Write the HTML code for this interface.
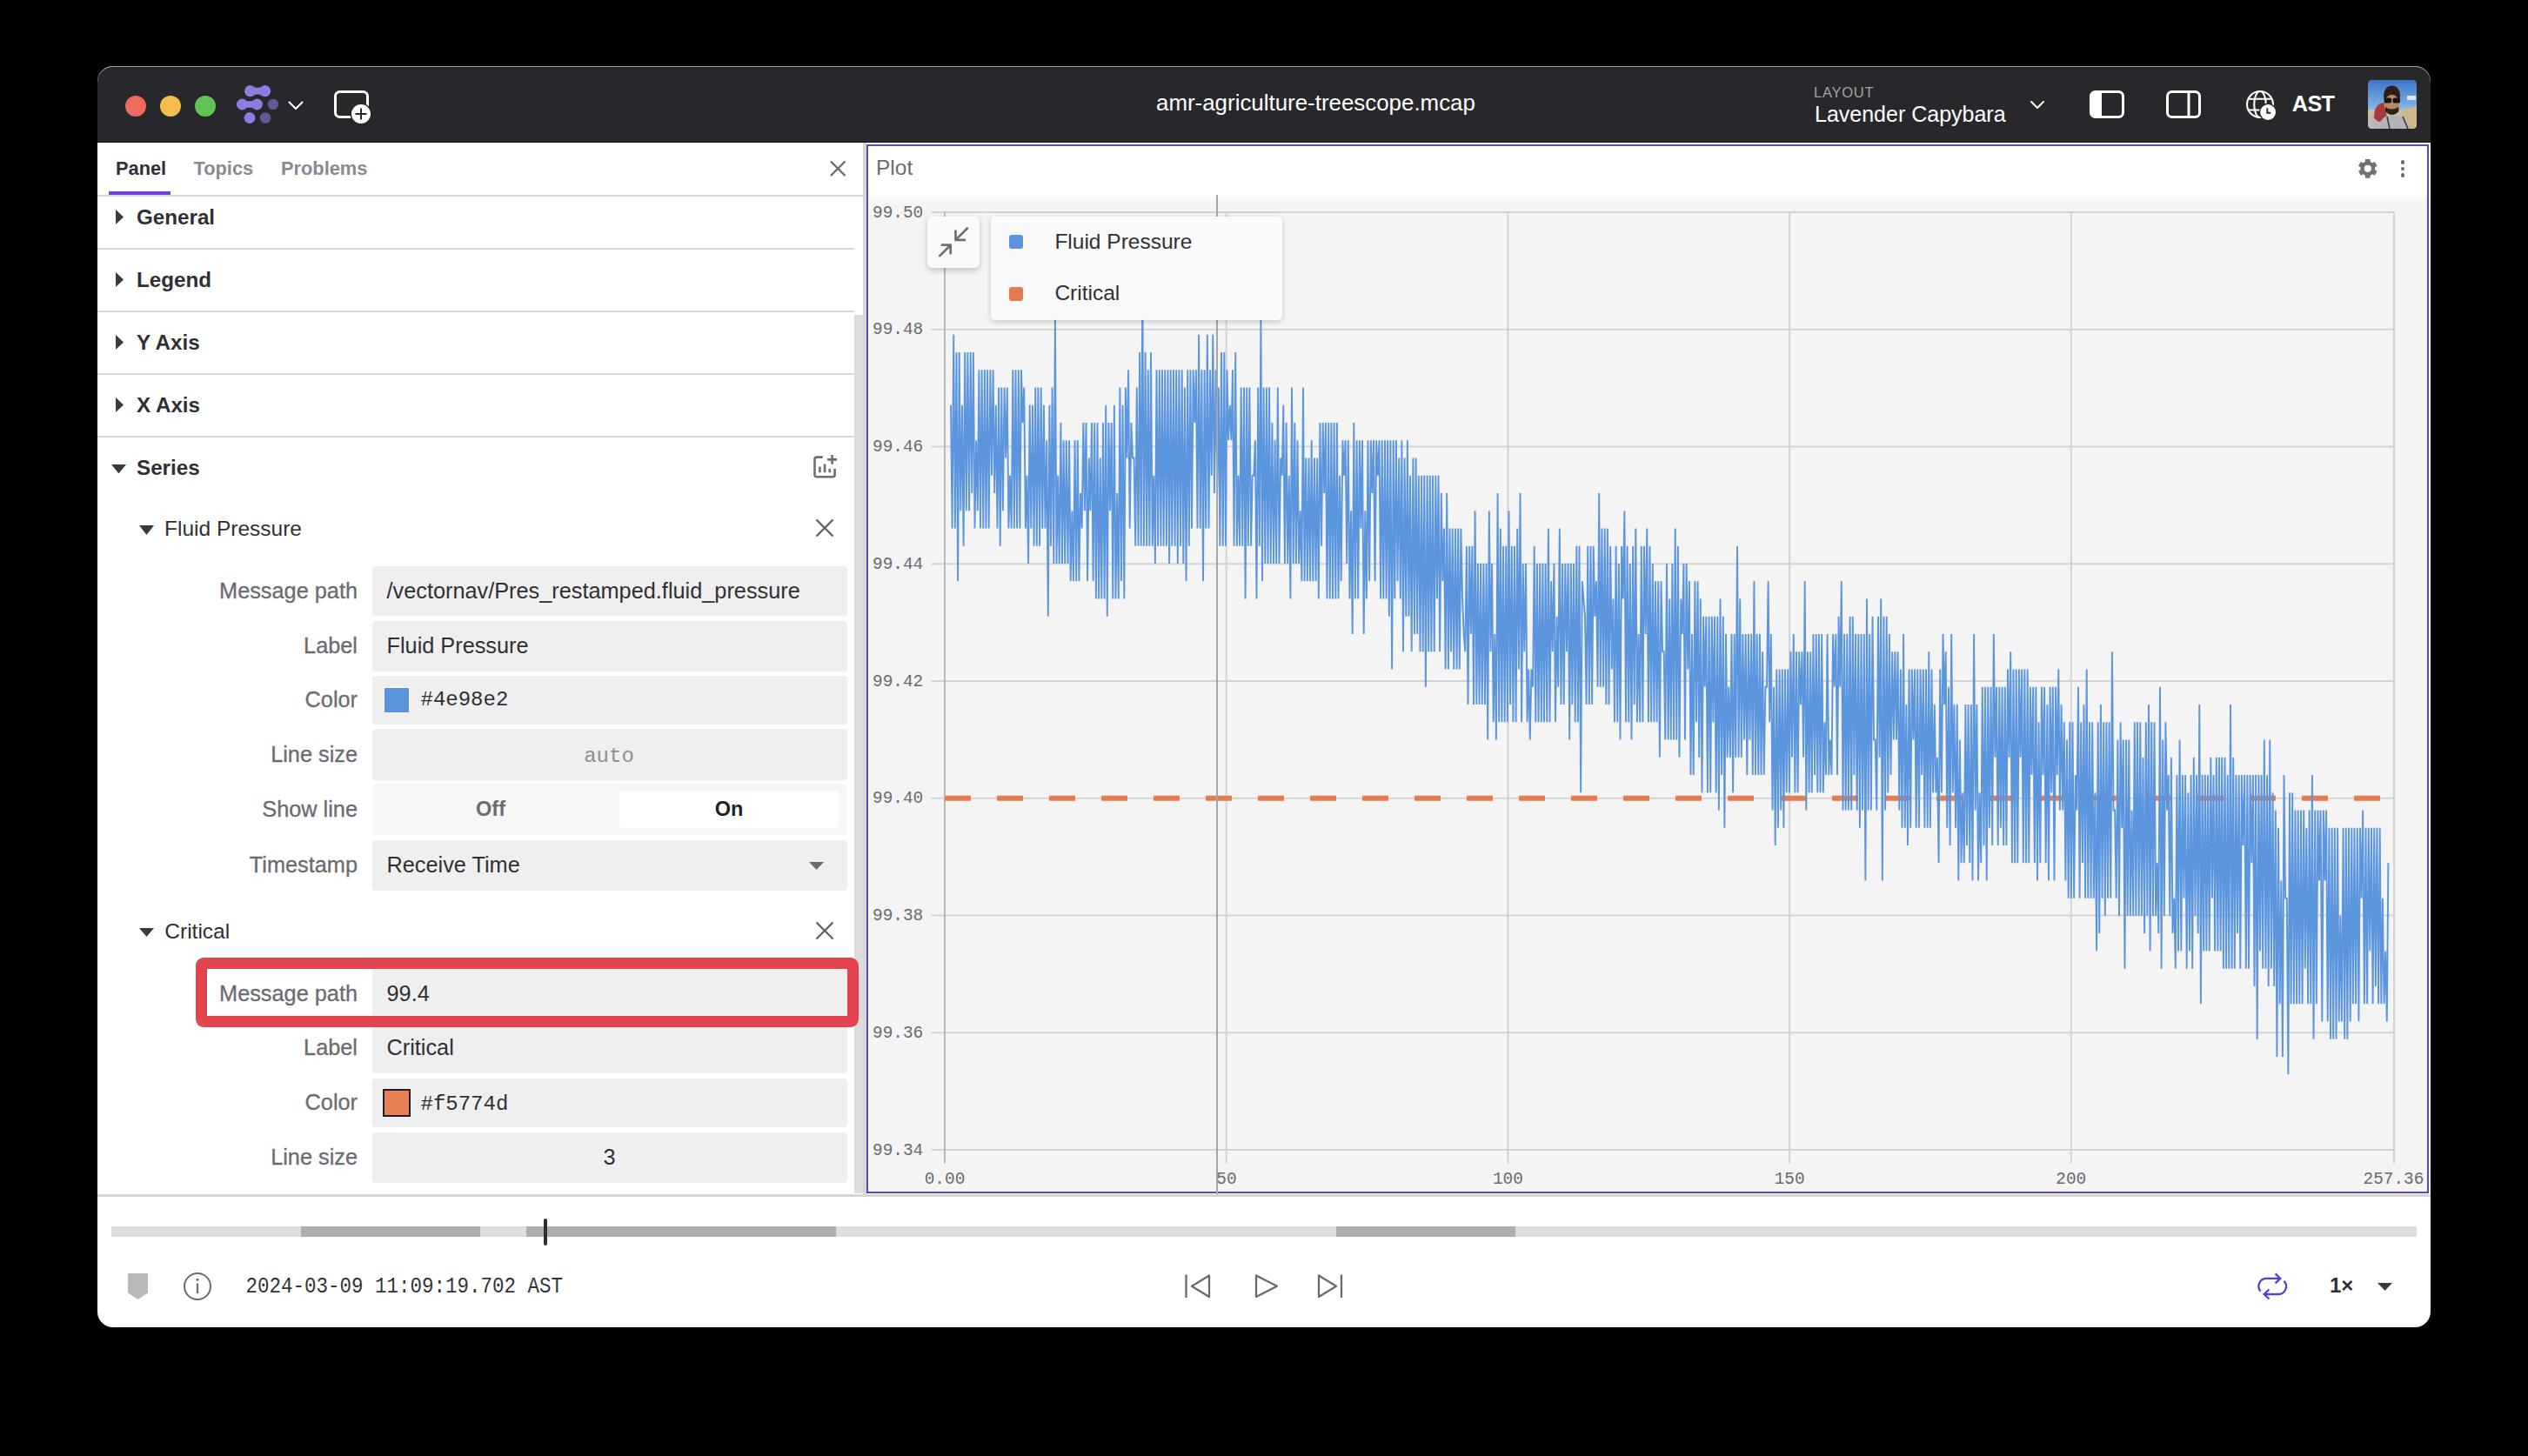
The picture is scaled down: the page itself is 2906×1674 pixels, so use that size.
<!DOCTYPE html>
<html><head><meta charset="utf-8"><title>Plot</title>
<style>
html,body{margin:0;padding:0;background:#000;width:2906px;height:1674px;overflow:hidden;}
.b{position:absolute;}
.t{position:absolute;white-space:nowrap;}
</style></head><body>
<div class="b" style="left:112.00px;top:76.00px;width:2682.00px;height:1450.00px;background:#ffffff;border-radius:18px;overflow:hidden;"></div>
<div class="b" style="left:112.00px;top:76.00px;width:2682.00px;height:88.00px;background:#28282c;border-radius:18px 18px 0 0;box-shadow:inset 0 1px 0 #a9a9ac, inset 0 2px 0 #202023;"></div>
<div class="b" style="left:112.00px;top:163.00px;width:2682.00px;height:1.00px;background:#151518;"></div>
<div class="b" style="left:144.00px;top:110.00px;width:24.00px;height:24.00px;background:#ed6a5e;border-radius:50%;"></div>
<div class="b" style="left:184.00px;top:110.00px;width:24.00px;height:24.00px;background:#f5bf4f;border-radius:50%;"></div>
<div class="b" style="left:224.00px;top:110.00px;width:24.00px;height:24.00px;background:#61c454;border-radius:50%;"></div>
<svg class="b" style="left:266px;top:92px;" width="60" height="56" viewBox="266 92 60 56">
<g fill="#8a7ee2">
<circle cx="287.6" cy="104.6" r="6.6"/><circle cx="304.6" cy="104.6" r="6.6"/><path d="M287.6 99.5 Q296 102 304.6 99.5 L304.6 109.7 Q296 107.2 287.6 109.7Z"/>
<circle cx="278.3" cy="120" r="6.4"/><circle cx="295.5" cy="120" r="6.4"/><path d="M278.3 115 Q287 117.5 295.5 115 L295.5 125 Q287 122.5 278.3 125Z"/>
<circle cx="287" cy="135.5" r="6.4"/>
</g>
<g fill="#5e5a92"><circle cx="313.9" cy="120" r="6.2"/><circle cx="305" cy="135.5" r="6.3"/></g>
</svg>
<svg class="b" style="left:328px;top:112px;" width="24" height="18" viewBox="0 0 24 18"><path d="M4.5 5.5 L12 13 L19.5 5.5" fill="none" stroke="#fff" stroke-width="2" stroke-linecap="round" stroke-linejoin="round"/></svg>
<svg class="b" style="left:376px;top:96px;" width="60" height="56" viewBox="376 96 60 56">
<rect x="385.5" y="105.5" width="37" height="29" rx="5" fill="none" stroke="#fff" stroke-width="3"/>
<circle cx="415" cy="131" r="12.5" fill="#28282c"/>
<circle cx="415" cy="131" r="11" fill="#fff"/>
<path d="M415 124.5 V137.5 M408.5 131 H421.5" stroke="#28282c" stroke-width="2"/>
</svg>
<div class="t" style="top:106.37px;font-size:25.9px;line-height:25.9px;color:#ffffff;font-weight:normal;font-family:'Liberation Sans', sans-serif;left:1329.00px;">amr-agriculture-treescope.mcap</div>
<div class="t" style="top:97.73px;font-size:16.5px;line-height:16.5px;color:#a2a2a6;font-weight:normal;font-family:'Liberation Sans', sans-serif;letter-spacing:0.75px;left:2085.00px;">LAYOUT</div>
<div class="t" style="top:118.83px;font-size:25px;line-height:25px;color:#ffffff;font-weight:normal;font-family:'Liberation Sans', sans-serif;left:2086.00px;">Lavender Capybara</div>
<svg class="b" style="left:2330px;top:110px;" width="24" height="20" viewBox="0 0 24 20"><path d="M5 7 L12 14 L19 7" fill="none" stroke="#fff" stroke-width="2" stroke-linecap="round" stroke-linejoin="round"/></svg>
<svg class="b" style="left:2396px;top:98px;" width="52" height="44" viewBox="2396 98 52 44">
<rect x="2403.5" y="105.5" width="37" height="29" rx="5" fill="none" stroke="#fff" stroke-width="3"/>
<path d="M2408 105.5 H2416 V134.5 H2408 A4.5 4.5 0 0 1 2403.5 130 V110 A4.5 4.5 0 0 1 2408 105.5Z" fill="#fff"/>
</svg>
<svg class="b" style="left:2484px;top:98px;" width="52" height="44" viewBox="2484 98 52 44">
<rect x="2491.5" y="105.5" width="37" height="29" rx="5" fill="none" stroke="#fff" stroke-width="3"/>
<path d="M2516 105.5 V134.5" stroke="#fff" stroke-width="3"/>
</svg>
<svg class="b" style="left:2578px;top:100px;" width="44" height="42" viewBox="2578 100 44 42">
<g fill="none" stroke="#fff" stroke-width="2.1">
<circle cx="2598" cy="120" r="15"/>
<ellipse cx="2598" cy="120" rx="6.8" ry="15"/>
<path d="M2584.5 113.8 H2611.5 M2584.5 126.5 H2611.5"/>
</g>
<circle cx="2607.1" cy="129" r="10.4" fill="#28282c"/>
<circle cx="2607.1" cy="129" r="8.9" fill="#fff"/>
<path d="M2606.3 124.2 V129.8 H2610.3" fill="none" stroke="#28282c" stroke-width="1.9"/>
</svg>
<div class="t" style="top:106.86px;font-size:25.2px;line-height:25.2px;color:#ffffff;font-weight:bold;font-family:'Liberation Sans', sans-serif;letter-spacing:-0.6px;left:2634.80px;">AST</div>
<svg class="b" style="left:2722px;top:92px;" width="56" height="56" viewBox="0 0 56 56">
<defs><linearGradient id="sky" x1="0" y1="0" x2="0" y2="1"><stop offset="0" stop-color="#3d74c9"/><stop offset="0.6" stop-color="#86b8e6"/><stop offset="0.62" stop-color="#c9c2a8"/><stop offset="1" stop-color="#bfae86"/></linearGradient>
<clipPath id="avc"><rect x="0" y="0" width="56" height="56" rx="4.5"/></clipPath></defs>
<g clip-path="url(#avc)">
<rect width="56" height="56" fill="url(#sky)"/>
<rect x="45" y="18" width="10" height="5" fill="#dfe6ea"/>
<path d="M38 34 L56 30 L56 56 L44 56Z" fill="#cdb88e"/>
<path d="M0 46 Q4 40 14 38 L20 40 L24 56 L0 56Z" fill="#b9b9bd"/>
<path d="M7 44 Q7 30 14 27 L20 26 L22 46 L12 48Z" fill="#a83a3e"/>
<path d="M12 56 Q14 44 22 41 L36 41 Q46 44 48 56Z" fill="#b4b4ba"/>
<path d="M22 42 L25 56 M40 42 L46 56" stroke="#3a3a40" stroke-width="1.6"/>
<ellipse cx="27.6" cy="17.5" rx="9.6" ry="11" fill="#2b2018"/>
<ellipse cx="27.5" cy="28.5" rx="8.8" ry="11.5" fill="#b88a68"/>
<path d="M19 19 Q27.5 13 36 19 L36 15 Q27.5 9 19 15Z" fill="#2b2018"/>
<rect x="18.5" y="20.5" width="8.5" height="6" rx="2" fill="#1b1414"/><rect x="28.5" y="20.5" width="8.5" height="6" rx="2" fill="#1b1414"/>
<path d="M20 31 Q27.5 36 35 31 L35.5 36 Q28 44 20 36Z" fill="#2e2219"/>
</g>
</svg>
<div class="t" style="top:182.54px;font-size:21.8px;line-height:21.8px;color:#303034;font-weight:bold;font-family:'Liberation Sans', sans-serif;left:133.00px;">Panel</div>
<div class="t" style="top:182.54px;font-size:21.8px;line-height:21.8px;color:#8a8a92;font-weight:bold;font-family:'Liberation Sans', sans-serif;left:222.50px;">Topics</div>
<div class="t" style="top:182.54px;font-size:21.8px;line-height:21.8px;color:#8a8a92;font-weight:bold;font-family:'Liberation Sans', sans-serif;left:323.00px;">Problems</div>
<div class="b" style="left:125.00px;top:220.00px;width:71.00px;height:4.00px;background:#6f42e0;"></div>
<div class="b" style="left:112.00px;top:224.00px;width:880.00px;height:2.00px;background:#d9d9db;"></div>
<svg class="b" style="left:950px;top:181px;" width="26" height="26" viewBox="0 0 26 26"><path d="M5 4.5 L21.5 21 M21.5 4.5 L5 21" stroke="#6a6a6f" stroke-width="2.3"/></svg>
<svg class="b" style="left:133px;top:241px;" width="9" height="17" viewBox="0 0 9 17"><path d="M0 0 L9 8.5 L0 17Z" fill="#3a3a3f"/></svg>
<div class="t" style="top:237.51px;font-size:24.2px;line-height:24.2px;color:#303034;font-weight:bold;font-family:'Liberation Sans', sans-serif;left:157.00px;">General</div>
<div class="b" style="left:112.00px;top:285.00px;width:870.00px;height:2.00px;background:#d9d9db;"></div>
<svg class="b" style="left:133px;top:313px;" width="9" height="17" viewBox="0 0 9 17"><path d="M0 0 L9 8.5 L0 17Z" fill="#3a3a3f"/></svg>
<div class="t" style="top:309.51px;font-size:24.2px;line-height:24.2px;color:#303034;font-weight:bold;font-family:'Liberation Sans', sans-serif;left:157.00px;">Legend</div>
<div class="b" style="left:112.00px;top:357.00px;width:870.00px;height:2.00px;background:#d9d9db;"></div>
<svg class="b" style="left:133px;top:385px;" width="9" height="17" viewBox="0 0 9 17"><path d="M0 0 L9 8.5 L0 17Z" fill="#3a3a3f"/></svg>
<div class="t" style="top:381.51px;font-size:24.2px;line-height:24.2px;color:#303034;font-weight:bold;font-family:'Liberation Sans', sans-serif;left:157.00px;">Y Axis</div>
<div class="b" style="left:112.00px;top:429.00px;width:870.00px;height:2.00px;background:#d9d9db;"></div>
<svg class="b" style="left:133px;top:457px;" width="9" height="17" viewBox="0 0 9 17"><path d="M0 0 L9 8.5 L0 17Z" fill="#3a3a3f"/></svg>
<div class="t" style="top:453.51px;font-size:24.2px;line-height:24.2px;color:#303034;font-weight:bold;font-family:'Liberation Sans', sans-serif;left:157.00px;">X Axis</div>
<div class="b" style="left:112.00px;top:501.00px;width:870.00px;height:2.00px;background:#d9d9db;"></div>
<svg class="b" style="left:128px;top:533.5px;" width="17" height="10.5" viewBox="0 0 17 10.5"><path d="M0 0 L17 0 L8.5 10.5Z" fill="#3a3a3f"/></svg>
<div class="t" style="top:526.11px;font-size:24.2px;line-height:24.2px;color:#303034;font-weight:bold;font-family:'Liberation Sans', sans-serif;left:157.00px;">Series</div>
<svg class="b" style="left:930px;top:518px;" width="36" height="36" viewBox="930 518 36 36">
<g fill="none" stroke="#6e6e72" stroke-width="2.6">
<path d="M945.8 525.6 H939 A2.5 2.5 0 0 0 936.5 528.1 V545.8 A2.5 2.5 0 0 0 939 548.3 H957.1 A2.5 2.5 0 0 0 959.6 545.8 V538.8"/>
<path d="M942.4 536.5 V543.3 M948.1 533.5 V543.3 M953.7 538.9 V543.3"/>
<path d="M956.6 523 V533.8 M951.2 528.4 H962"/>
</g></svg>
<svg class="b" style="left:160px;top:604px;" width="17" height="11" viewBox="0 0 17 11"><path d="M0 0 L17 0 L8.5 11Z" fill="#3a3a3f"/></svg>
<div class="t" style="top:595.56px;font-size:24.5px;line-height:24.5px;color:#303034;font-weight:normal;font-family:'Liberation Sans', sans-serif;left:189.00px;">Fluid Pressure</div>
<svg class="b" style="left:935px;top:594px;" width="26" height="26" viewBox="0 0 26 26"><path d="M3.5 3.5 L22.5 22.5 M22.5 3.5 L3.5 22.5" stroke="#5f5f64" stroke-width="2.3"/></svg>
<div class="b" style="left:428.00px;top:651.00px;width:546.00px;height:57.00px;background:#efefef;border-radius:4px;"></div>
<div class="t" style="top:666.68px;font-size:25.3px;line-height:25.3px;color:#6b6b71;font-weight:normal;font-family:'Liberation Sans', sans-serif;right:2495.00px;text-align:right;-webkit-text-stroke:0.3px #6b6b71;">Message path</div>
<div class="t" style="top:666.68px;font-size:25.3px;line-height:25.3px;color:#303034;font-weight:normal;font-family:'Liberation Sans', sans-serif;left:444.50px;">/vectornav/Pres_restamped.fluid_pressure</div>
<div class="b" style="left:428.00px;top:713.50px;width:546.00px;height:58.00px;background:#efefef;border-radius:4px;"></div>
<div class="t" style="top:729.68px;font-size:25.3px;line-height:25.3px;color:#6b6b71;font-weight:normal;font-family:'Liberation Sans', sans-serif;right:2495.00px;text-align:right;-webkit-text-stroke:0.3px #6b6b71;">Label</div>
<div class="t" style="top:729.68px;font-size:25.3px;line-height:25.3px;color:#303034;font-weight:normal;font-family:'Liberation Sans', sans-serif;left:444.50px;">Fluid Pressure</div>
<div class="b" style="left:428.00px;top:776.50px;width:546.00px;height:56.50px;background:#efefef;border-radius:4px;"></div>
<div class="t" style="top:791.93px;font-size:25.3px;line-height:25.3px;color:#6b6b71;font-weight:normal;font-family:'Liberation Sans', sans-serif;right:2495.00px;text-align:right;-webkit-text-stroke:0.3px #6b6b71;">Color</div>
<div class="b" style="left:442.00px;top:791.00px;width:28.00px;height:28.00px;background:#5b94dc;box-shadow:0 0 0 1px #fafafa;"></div>
<div class="t" style="top:793.11px;font-size:24px;line-height:24px;color:#303034;font-weight:normal;font-family:'Liberation Mono', monospace;left:483.50px;">#4e98e2</div>
<div class="b" style="left:428.00px;top:838.00px;width:546.00px;height:59.00px;background:#efefef;border-radius:4px;"></div>
<div class="t" style="top:854.68px;font-size:25.3px;line-height:25.3px;color:#6b6b71;font-weight:normal;font-family:'Liberation Sans', sans-serif;right:2495.00px;text-align:right;-webkit-text-stroke:0.3px #6b6b71;">Line size</div>
<div class="t" style="top:857.61px;font-size:24px;line-height:24px;color:#8e8e93;font-weight:normal;font-family:'Liberation Mono', monospace;left:200.00px;width:1000px;text-align:center;">auto</div>
<div class="b" style="left:428.00px;top:901.00px;width:546.00px;height:59.00px;background:#f6f6f6;border-radius:4px;"></div>
<div class="t" style="top:917.68px;font-size:25.3px;line-height:25.3px;color:#6b6b71;font-weight:normal;font-family:'Liberation Sans', sans-serif;right:2495.00px;text-align:right;-webkit-text-stroke:0.3px #6b6b71;">Show line</div>
<div class="b" style="left:712.00px;top:909.00px;width:252.00px;height:43.00px;background:#ffffff;border-radius:4px;"></div>
<div class="t" style="top:918.60px;font-size:23.5px;line-height:23.5px;color:#6b6b71;font-weight:bold;font-family:'Liberation Sans', sans-serif;left:64.00px;width:1000px;text-align:center;">Off</div>
<div class="t" style="top:918.60px;font-size:23.5px;line-height:23.5px;color:#222226;font-weight:bold;font-family:'Liberation Sans', sans-serif;left:338.00px;width:1000px;text-align:center;">On</div>
<div class="b" style="left:428.00px;top:965.50px;width:546.00px;height:58.00px;background:#efefef;border-radius:4px;"></div>
<div class="t" style="top:981.68px;font-size:25.3px;line-height:25.3px;color:#6b6b71;font-weight:normal;font-family:'Liberation Sans', sans-serif;right:2495.00px;text-align:right;-webkit-text-stroke:0.3px #6b6b71;">Timestamp</div>
<div class="t" style="top:981.68px;font-size:25.3px;line-height:25.3px;color:#303034;font-weight:normal;font-family:'Liberation Sans', sans-serif;left:444.50px;">Receive Time</div>
<svg class="b" style="left:930px;top:991px;" width="17" height="9" viewBox="0 0 17 9"><path d="M0 0 L17 0 L8.5 9Z" fill="#6a6a6f"/></svg>
<svg class="b" style="left:160px;top:1066.5px;" width="17" height="10.0" viewBox="0 0 17 10.0"><path d="M0 0 L17 0 L8.5 10.0Z" fill="#3a3a3f"/></svg>
<div class="t" style="top:1058.56px;font-size:24.5px;line-height:24.5px;color:#303034;font-weight:normal;font-family:'Liberation Sans', sans-serif;left:189.30px;">Critical</div>
<svg class="b" style="left:935px;top:1057px;" width="26" height="26" viewBox="0 0 26 26"><path d="M3.5 3.5 L22.5 22.5 M22.5 3.5 L3.5 22.5" stroke="#5f5f64" stroke-width="2.3"/></svg>
<div class="b" style="left:428.00px;top:1113.50px;width:546.00px;height:58.00px;background:#efefef;border-radius:4px;"></div>
<div class="t" style="top:1129.68px;font-size:25.3px;line-height:25.3px;color:#6b6b71;font-weight:normal;font-family:'Liberation Sans', sans-serif;right:2495.00px;text-align:right;-webkit-text-stroke:0.3px #6b6b71;">Message path</div>
<div class="t" style="top:1129.68px;font-size:25.3px;line-height:25.3px;color:#303034;font-weight:normal;font-family:'Liberation Sans', sans-serif;left:444.50px;">99.4</div>
<div class="b" style="left:428.00px;top:1176.00px;width:546.00px;height:58.00px;background:#efefef;border-radius:4px;"></div>
<div class="t" style="top:1192.18px;font-size:25.3px;line-height:25.3px;color:#6b6b71;font-weight:normal;font-family:'Liberation Sans', sans-serif;right:2495.00px;text-align:right;-webkit-text-stroke:0.3px #6b6b71;">Label</div>
<div class="t" style="top:1192.18px;font-size:25.3px;line-height:25.3px;color:#303034;font-weight:normal;font-family:'Liberation Sans', sans-serif;left:444.50px;">Critical</div>
<div class="b" style="left:428.00px;top:1239.50px;width:546.00px;height:56.50px;background:#efefef;border-radius:4px;"></div>
<div class="t" style="top:1254.93px;font-size:25.3px;line-height:25.3px;color:#6b6b71;font-weight:normal;font-family:'Liberation Sans', sans-serif;right:2495.00px;text-align:right;-webkit-text-stroke:0.3px #6b6b71;">Color</div>
<div class="b" style="left:440.00px;top:1252.00px;width:32.00px;height:32.00px;background:#e97f55;border:2px solid #1e1e22;box-sizing:border-box;"></div>
<div class="t" style="top:1257.91px;font-size:24px;line-height:24px;color:#303034;font-weight:normal;font-family:'Liberation Mono', monospace;left:483.50px;">#f5774d</div>
<div class="b" style="left:428.00px;top:1301.50px;width:546.00px;height:58.50px;background:#efefef;border-radius:4px;"></div>
<div class="t" style="top:1317.93px;font-size:25.3px;line-height:25.3px;color:#6b6b71;font-weight:normal;font-family:'Liberation Sans', sans-serif;right:2495.00px;text-align:right;-webkit-text-stroke:0.3px #6b6b71;">Line size</div>
<div class="t" style="top:1318.08px;font-size:25.3px;line-height:25.3px;color:#303034;font-weight:normal;font-family:'Liberation Sans', sans-serif;left:200.60px;width:1000px;text-align:center;">3</div>
<div class="b" style="left:982.00px;top:362.00px;width:10.00px;height:1010.00px;background:#dcdcdc;"></div>
<div class="b" style="left:225.00px;top:1100.50px;width:761.50px;height:80.00px;border:13px solid #e3444d;border-radius:9px;box-sizing:border-box;"></div>
<div class="b" style="left:992.00px;top:164.00px;width:4.00px;height:1212.00px;background:#d5d5da;"></div>
<div class="b" style="left:996.00px;top:164.00px;width:1798.00px;height:1208.00px;background:linear-gradient(#ffffff 0px, #ffffff 58px, #f4f4f5 72px, #f4f4f5 100%);"></div>
<div class="b" style="left:996.00px;top:166.00px;width:1796.00px;height:1206.00px;border:2px solid #6044b9;box-sizing:border-box;"></div>
<div class="t" style="top:181.26px;font-size:24.5px;line-height:24.5px;color:#6a6a6f;font-weight:normal;font-family:'Liberation Sans', sans-serif;left:1007.00px;">Plot</div>
<svg class="b" style="left:0;top:0;" width="2906" height="1674" viewBox="0 0 2906 1674"><path d="M1070.5 244.00 H2752" stroke="#d3d3d5" stroke-width="2"/><path d="M1070.5 378.75 H2752" stroke="#d3d3d5" stroke-width="2"/><path d="M1070.5 513.50 H2752" stroke="#d3d3d5" stroke-width="2"/><path d="M1070.5 648.25 H2752" stroke="#d3d3d5" stroke-width="2"/><path d="M1070.5 783.00 H2752" stroke="#d3d3d5" stroke-width="2"/><path d="M1070.5 917.75 H2752" stroke="#d3d3d5" stroke-width="2"/><path d="M1070.5 1052.50 H2752" stroke="#d3d3d5" stroke-width="2"/><path d="M1070.5 1187.25 H2752" stroke="#d3d3d5" stroke-width="2"/><path d="M1070.5 1322.00 H2752" stroke="#d3d3d5" stroke-width="2"/><path d="M1086.00 244 V1337.5" stroke="#d3d3d5" stroke-width="2"/><path d="M1409.70 244 V1337.5" stroke="#d3d3d5" stroke-width="2"/><path d="M1733.40 244 V1337.5" stroke="#d3d3d5" stroke-width="2"/><path d="M2057.10 244 V1337.5" stroke="#d3d3d5" stroke-width="2"/><path d="M2380.80 244 V1337.5" stroke="#d3d3d5" stroke-width="2"/><path d="M2752 244 V1337.5" stroke="#d3d3d5" stroke-width="2"/><path d="M1086 244 V1337.5" stroke="#b9b9bc" stroke-width="2"/><path d="M1086 917.8 H2752" stroke="#e57c53" stroke-width="6" stroke-dasharray="30 30"/><path d="M1093.0 465.8 1094.6 607.5 1096.2 384.8 1097.9 607.5 1099.5 405.0 1101.1 668.3 1102.7 405.0 1104.3 587.3 1106.0 465.8 1107.6 627.8 1109.2 405.0 1110.8 587.3 1112.4 405.0 1114.1 587.3 1115.7 405.0 1117.3 567.0 1118.9 405.0 1120.5 607.5 1122.2 506.3 1123.8 587.3 1125.4 425.3 1127.0 607.5 1128.6 425.3 1130.3 607.5 1131.9 425.3 1133.5 607.5 1135.1 425.3 1136.7 607.5 1138.4 425.3 1140.0 546.8 1141.6 425.3 1143.2 567.0 1144.8 465.8 1146.5 607.5 1148.1 445.5 1149.7 627.8 1151.3 445.5 1152.9 587.3 1154.6 445.5 1156.2 526.5 1157.8 445.5 1159.4 607.5 1161.0 546.8 1162.7 607.5 1164.3 425.3 1165.9 607.5 1167.5 425.3 1169.1 607.5 1170.8 425.3 1172.4 607.5 1174.0 425.3 1175.6 486.0 1177.2 445.5 1178.9 607.5 1180.5 546.8 1182.1 648.0 1183.7 465.8 1185.3 607.5 1187.0 465.8 1188.6 627.8 1190.2 445.5 1191.8 627.8 1193.4 445.5 1195.1 627.8 1196.7 445.5 1198.3 607.5 1199.9 465.8 1201.5 607.5 1203.2 506.3 1204.8 708.8 1206.4 465.8 1208.0 627.8 1209.6 445.5 1211.3 648.0 1212.9 364.5 1214.5 648.0 1216.1 546.8 1217.7 648.0 1219.4 486.0 1221.0 648.0 1222.6 506.3 1224.2 648.0 1225.8 506.3 1227.5 648.0 1229.1 506.3 1230.7 668.3 1232.3 587.3 1233.9 668.3 1235.6 506.3 1237.2 668.3 1238.8 506.3 1240.4 668.3 1242.0 567.0 1243.7 607.5 1245.3 486.0 1246.9 587.3 1248.5 486.0 1250.1 668.3 1251.8 526.5 1253.4 587.3 1255.0 486.0 1256.6 668.3 1258.2 486.0 1259.9 688.5 1261.5 486.0 1263.1 688.5 1264.7 526.5 1266.3 688.5 1268.0 486.0 1269.6 688.5 1271.2 465.8 1272.8 708.8 1274.4 486.0 1276.1 587.3 1277.7 486.0 1279.3 688.5 1280.9 465.8 1282.5 688.5 1284.2 567.0 1285.8 688.5 1287.4 445.5 1289.0 668.3 1290.6 465.8 1292.3 688.5 1293.9 445.5 1295.5 526.5 1297.1 425.3 1298.7 607.5 1300.4 486.0 1302.0 526.5 1303.6 526.5 1305.2 627.8 1306.8 445.5 1308.5 627.8 1310.1 405.0 1311.7 627.8 1313.3 324.0 1314.9 627.8 1316.6 405.0 1318.2 627.8 1319.8 425.3 1321.4 627.8 1323.0 405.0 1324.7 627.8 1326.3 546.8 1327.9 648.0 1329.5 425.3 1331.1 627.8 1332.8 425.3 1334.4 627.8 1336.0 425.3 1337.6 627.8 1339.2 425.3 1340.9 627.8 1342.5 425.3 1344.1 648.0 1345.7 425.3 1347.3 627.8 1349.0 425.3 1350.6 627.8 1352.2 425.3 1353.8 648.0 1355.4 425.3 1357.1 627.8 1358.7 425.3 1360.3 648.0 1361.9 445.5 1363.5 668.3 1365.2 425.3 1366.8 627.8 1368.4 425.3 1370.0 607.5 1371.6 425.3 1373.3 486.0 1374.9 425.3 1376.5 607.5 1378.1 384.8 1379.7 607.5 1381.4 425.3 1383.0 668.3 1384.6 425.3 1386.2 607.5 1387.8 384.8 1389.5 607.5 1391.1 425.3 1392.7 546.8 1394.3 384.8 1395.9 567.0 1397.6 425.3 1399.2 567.0 1400.8 445.5 1402.4 627.8 1404.0 405.0 1405.7 627.8 1407.3 405.0 1408.9 627.8 1410.5 425.3 1412.1 506.3 1413.8 465.8 1415.4 506.3 1417.0 425.3 1418.6 627.8 1420.2 405.0 1421.9 627.8 1423.5 546.8 1425.1 627.8 1426.7 445.5 1428.3 627.8 1430.0 445.5 1431.6 688.5 1433.2 445.5 1434.8 627.8 1436.4 445.5 1438.1 627.8 1439.7 546.8 1441.3 546.8 1442.9 506.3 1444.5 688.5 1446.2 445.5 1447.8 627.8 1449.4 364.5 1451.0 668.3 1452.6 445.5 1454.3 648.0 1455.9 445.5 1457.5 648.0 1459.1 445.5 1460.7 648.0 1462.4 486.0 1464.0 648.0 1465.6 506.3 1467.2 648.0 1468.8 445.5 1470.5 648.0 1472.1 526.5 1473.7 546.8 1475.3 465.8 1476.9 648.0 1478.6 486.0 1480.2 648.0 1481.8 546.8 1483.4 688.5 1485.0 445.5 1486.7 648.0 1488.3 486.0 1489.9 648.0 1491.5 506.3 1493.1 648.0 1494.8 587.3 1496.4 668.3 1498.0 445.5 1499.6 668.3 1501.2 526.5 1502.9 668.3 1504.5 526.5 1506.1 668.3 1507.7 506.3 1509.3 668.3 1511.0 526.5 1512.6 668.3 1514.2 526.5 1515.8 688.5 1517.4 486.0 1519.1 627.8 1520.7 486.0 1522.3 567.0 1523.9 486.0 1525.5 688.5 1527.2 486.0 1528.8 688.5 1530.4 486.0 1532.0 688.5 1533.6 486.0 1535.3 688.5 1536.9 486.0 1538.5 688.5 1540.1 546.8 1541.7 668.3 1543.4 506.3 1545.0 546.8 1546.6 506.3 1548.2 648.0 1549.8 506.3 1551.5 688.5 1553.1 587.3 1554.7 729.0 1556.3 486.0 1557.9 688.5 1559.6 506.3 1561.2 688.5 1562.8 506.3 1564.4 607.5 1566.0 506.3 1567.7 729.0 1569.3 587.3 1570.9 688.5 1572.5 506.3 1574.1 668.3 1575.8 506.3 1577.4 567.0 1579.0 506.3 1580.6 668.3 1582.2 506.3 1583.9 546.8 1585.5 506.3 1587.1 688.5 1588.7 506.3 1590.3 688.5 1592.0 506.3 1593.6 688.5 1595.2 506.3 1596.8 708.8 1598.4 506.3 1600.1 769.5 1601.7 506.3 1603.3 688.5 1604.9 506.3 1606.5 668.3 1608.2 526.5 1609.8 688.5 1611.4 506.3 1613.0 749.3 1614.6 526.5 1616.3 708.8 1617.9 506.3 1619.5 708.8 1621.1 546.8 1622.7 749.3 1624.4 526.5 1626.0 729.0 1627.6 526.5 1629.2 729.0 1630.8 546.8 1632.5 749.3 1634.1 546.8 1635.7 749.3 1637.3 546.8 1638.9 789.8 1640.6 546.8 1642.2 749.3 1643.8 546.8 1645.4 749.3 1647.0 546.8 1648.7 749.3 1650.3 546.8 1651.9 688.5 1653.5 546.8 1655.1 749.3 1656.8 567.0 1658.4 668.3 1660.0 607.5 1661.6 769.5 1663.2 567.0 1664.9 769.5 1666.5 607.5 1668.1 749.3 1669.7 607.5 1671.3 769.5 1673.0 607.5 1674.6 769.5 1676.2 607.5 1677.8 769.5 1679.4 607.5 1681.1 688.5 1682.7 729.0 1684.3 749.3 1685.9 627.8 1687.5 810.0 1689.2 627.8 1690.8 729.0 1692.4 627.8 1694.0 810.0 1695.6 587.3 1697.3 810.0 1698.9 648.0 1700.5 810.0 1702.1 648.0 1703.7 810.0 1705.4 648.0 1707.0 810.0 1708.6 648.0 1710.2 850.5 1711.8 587.3 1713.5 749.3 1715.1 648.0 1716.7 830.3 1718.3 729.0 1719.9 850.5 1721.6 567.0 1723.2 830.3 1724.8 607.5 1726.4 830.3 1728.0 627.8 1729.7 830.3 1731.3 627.8 1732.9 830.3 1734.5 587.3 1736.1 810.0 1737.8 627.8 1739.4 830.3 1741.0 627.8 1742.6 830.3 1744.2 607.5 1745.9 769.5 1747.5 567.0 1749.1 830.3 1750.7 648.0 1752.3 749.3 1754.0 648.0 1755.6 830.3 1757.2 769.5 1758.8 850.5 1760.4 769.5 1762.1 789.8 1763.7 627.8 1765.3 830.3 1766.9 648.0 1768.5 830.3 1770.2 648.0 1771.8 830.3 1773.4 648.0 1775.0 830.3 1776.6 648.0 1778.3 830.3 1779.9 607.5 1781.5 830.3 1783.1 668.3 1784.7 749.3 1786.4 648.0 1788.0 830.3 1789.6 708.8 1791.2 789.8 1792.8 607.5 1794.5 810.0 1796.1 648.0 1797.7 810.0 1799.3 648.0 1800.9 749.3 1802.6 648.0 1804.2 850.5 1805.8 648.0 1807.4 810.0 1809.0 648.0 1810.7 830.3 1812.3 627.8 1813.9 830.3 1815.5 627.8 1817.1 911.3 1818.8 668.3 1820.4 688.5 1822.0 708.8 1823.6 810.0 1825.2 627.8 1826.9 810.0 1828.5 627.8 1830.1 810.0 1831.7 627.8 1833.3 708.8 1835.0 668.3 1836.6 789.8 1838.2 567.0 1839.8 789.8 1841.4 607.5 1843.1 789.8 1844.7 607.5 1846.3 810.0 1847.9 607.5 1849.5 810.0 1851.2 627.8 1852.8 769.5 1854.4 688.5 1856.0 830.3 1857.6 627.8 1859.3 830.3 1860.9 648.0 1862.5 850.5 1864.1 627.8 1865.7 688.5 1867.4 587.3 1869.0 830.3 1870.6 627.8 1872.2 830.3 1873.8 648.0 1875.5 850.5 1877.1 627.8 1878.7 810.0 1880.3 607.5 1881.9 830.3 1883.6 729.0 1885.2 830.3 1886.8 627.8 1888.4 830.3 1890.0 627.8 1891.7 729.0 1893.3 607.5 1894.9 830.3 1896.5 627.8 1898.1 830.3 1899.8 648.0 1901.4 830.3 1903.0 668.3 1904.6 830.3 1906.2 668.3 1907.9 870.8 1909.5 668.3 1911.1 749.3 1912.7 749.3 1914.3 850.5 1916.0 648.0 1917.6 850.5 1919.2 688.5 1920.8 850.5 1922.4 648.0 1924.1 850.5 1925.7 607.5 1927.3 850.5 1928.9 627.8 1930.5 870.8 1932.2 688.5 1933.8 729.0 1935.4 648.0 1937.0 850.5 1938.6 648.0 1940.3 769.5 1941.9 668.3 1943.5 891.0 1945.1 729.0 1946.7 891.0 1948.4 668.3 1950.0 830.3 1951.6 668.3 1953.2 870.8 1954.8 688.5 1956.5 911.3 1958.1 708.8 1959.7 789.8 1961.3 708.8 1962.9 911.3 1964.6 708.8 1966.2 911.3 1967.8 708.8 1969.4 830.3 1971.0 708.8 1972.7 911.3 1974.3 708.8 1975.9 931.5 1977.5 688.5 1979.1 891.0 1980.8 708.8 1982.4 951.8 1984.0 729.0 1985.6 870.8 1987.2 789.8 1988.9 870.8 1990.5 729.0 1992.1 911.3 1993.7 729.0 1995.3 870.8 1997.0 627.8 1998.6 870.8 2000.2 688.5 2001.8 870.8 2003.4 729.0 2005.1 850.5 2006.7 729.0 2008.3 891.0 2009.9 729.0 2011.5 850.5 2013.2 729.0 2014.8 891.0 2016.4 668.3 2018.0 891.0 2019.6 729.0 2021.3 891.0 2022.9 729.0 2024.5 891.0 2026.1 749.3 2027.7 891.0 2029.4 789.8 2031.0 789.8 2032.6 668.3 2034.2 830.3 2035.8 729.0 2037.5 931.5 2039.1 789.8 2040.7 972.0 2042.3 769.5 2043.9 951.8 2045.6 769.5 2047.2 931.5 2048.8 769.5 2050.4 951.8 2052.0 769.5 2053.7 911.3 2055.3 769.5 2056.9 911.3 2058.5 749.3 2060.1 870.8 2061.8 729.0 2063.4 911.3 2065.0 749.3 2066.6 911.3 2068.2 749.3 2069.9 810.0 2071.5 749.3 2073.1 870.8 2074.7 668.3 2076.3 931.5 2078.0 749.3 2079.6 911.3 2081.2 749.3 2082.8 911.3 2084.4 729.0 2086.1 891.0 2087.7 729.0 2089.3 911.3 2090.9 729.0 2092.5 911.3 2094.2 729.0 2095.8 911.3 2097.4 830.3 2099.0 891.0 2100.6 729.0 2102.3 891.0 2103.9 850.5 2105.5 891.0 2107.1 729.0 2108.7 789.8 2110.4 729.0 2112.0 891.0 2113.6 708.8 2115.2 789.8 2116.8 668.3 2118.5 931.5 2120.1 729.0 2121.7 931.5 2123.3 729.0 2124.9 931.5 2126.6 708.8 2128.2 931.5 2129.8 708.8 2131.4 891.0 2133.0 729.0 2134.7 931.5 2136.3 729.0 2137.9 951.8 2139.5 729.0 2141.1 931.5 2142.8 729.0 2144.4 1012.5 2146.0 688.5 2147.6 931.5 2149.2 729.0 2150.9 931.5 2152.5 708.8 2154.1 850.5 2155.7 850.5 2157.3 931.5 2159.0 708.8 2160.6 870.8 2162.2 688.5 2163.8 1012.5 2165.4 708.8 2167.1 931.5 2168.7 708.8 2170.3 911.3 2171.9 729.0 2173.5 891.0 2175.2 749.3 2176.8 850.5 2178.4 749.3 2180.0 850.5 2181.6 749.3 2183.3 931.5 2184.9 769.5 2186.5 951.8 2188.1 729.0 2189.7 951.8 2191.4 810.0 2193.0 972.0 2194.6 769.5 2196.2 951.8 2197.8 769.5 2199.5 850.5 2201.1 769.5 2202.7 951.8 2204.3 769.5 2205.9 951.8 2207.6 769.5 2209.2 891.0 2210.8 769.5 2212.4 951.8 2214.0 769.5 2215.7 951.8 2217.3 749.3 2218.9 951.8 2220.5 769.5 2222.1 911.3 2223.8 810.0 2225.4 911.3 2227.0 870.8 2228.6 992.3 2230.2 769.5 2231.9 911.3 2233.5 729.0 2235.1 810.0 2236.7 749.3 2238.3 951.8 2240.0 789.8 2241.6 972.0 2243.2 729.0 2244.8 911.3 2246.4 810.0 2248.1 951.8 2249.7 810.0 2251.3 1012.5 2252.9 850.5 2254.5 992.3 2256.2 911.3 2257.8 992.3 2259.4 810.0 2261.0 972.0 2262.6 810.0 2264.3 992.3 2265.9 810.0 2267.5 1012.5 2269.1 729.0 2270.7 931.5 2272.4 810.0 2274.0 1012.5 2275.6 911.3 2277.2 992.3 2278.8 789.8 2280.5 972.0 2282.1 789.8 2283.7 1012.5 2285.3 789.8 2286.9 951.8 2288.6 789.8 2290.2 972.0 2291.8 729.0 2293.4 870.8 2295.0 789.8 2296.7 972.0 2298.3 789.8 2299.9 951.8 2301.5 789.8 2303.1 972.0 2304.8 789.8 2306.4 972.0 2308.0 769.5 2309.6 870.8 2311.2 749.3 2312.9 992.3 2314.5 769.5 2316.1 992.3 2317.7 769.5 2319.3 992.3 2321.0 769.5 2322.6 870.8 2324.2 769.5 2325.8 992.3 2327.4 769.5 2329.1 992.3 2330.7 769.5 2332.3 992.3 2333.9 789.8 2335.5 891.0 2337.2 789.8 2338.8 992.3 2340.4 789.8 2342.0 1012.5 2343.6 830.3 2345.3 992.3 2346.9 789.8 2348.5 891.0 2350.1 789.8 2351.7 992.3 2353.4 810.0 2355.0 1012.5 2356.6 789.8 2358.2 911.3 2359.8 789.8 2361.5 1012.5 2363.1 789.8 2364.7 891.0 2366.3 769.5 2367.9 931.5 2369.6 810.0 2371.2 931.5 2372.8 830.3 2374.4 1012.5 2376.0 850.5 2377.7 1032.8 2379.3 830.3 2380.9 1032.8 2382.5 830.3 2384.1 1032.8 2385.8 891.0 2387.4 931.5 2389.0 789.8 2390.6 1032.8 2392.2 830.3 2393.9 992.3 2395.5 810.0 2397.1 1032.8 2398.7 769.5 2400.3 1032.8 2402.0 830.3 2403.6 1032.8 2405.2 830.3 2406.8 1032.8 2408.4 911.3 2410.1 1093.5 2411.7 830.3 2413.3 1073.3 2414.9 810.0 2416.5 1032.8 2418.2 830.3 2419.8 1053.0 2421.4 830.3 2423.0 1032.8 2424.6 830.3 2426.3 1032.8 2427.9 749.3 2429.5 931.5 2431.1 931.5 2432.7 1032.8 2434.4 850.5 2436.0 1053.0 2437.6 830.3 2439.2 951.8 2440.8 850.5 2442.5 1113.8 2444.1 850.5 2445.7 1053.0 2447.3 850.5 2448.9 1053.0 2450.6 931.5 2452.2 1053.0 2453.8 830.3 2455.4 1053.0 2457.0 830.3 2458.7 1053.0 2460.3 830.3 2461.9 1053.0 2463.5 870.8 2465.1 1073.3 2466.8 830.3 2468.4 1053.0 2470.0 810.0 2471.6 1093.5 2473.2 830.3 2474.9 1053.0 2476.5 830.3 2478.1 1053.0 2479.7 992.3 2481.3 1073.3 2483.0 789.8 2484.6 1113.8 2486.2 850.5 2487.8 1053.0 2489.4 830.3 2491.1 931.5 2492.7 891.0 2494.3 1053.0 2495.9 870.8 2497.5 1073.3 2499.2 1032.8 2500.8 1113.8 2502.4 891.0 2504.0 1093.5 2505.6 850.5 2507.3 1093.5 2508.9 891.0 2510.5 1032.8 2512.1 891.0 2513.7 1113.8 2515.4 911.3 2517.0 1093.5 2518.6 891.0 2520.2 1113.8 2521.8 870.8 2523.5 1053.0 2525.1 891.0 2526.7 1073.3 2528.3 810.0 2529.9 1154.3 2531.6 891.0 2533.2 1093.5 2534.8 891.0 2536.4 1093.5 2538.0 891.0 2539.7 1093.5 2541.3 870.8 2542.9 1032.8 2544.5 891.0 2546.1 1093.5 2547.8 870.8 2549.4 1093.5 2551.0 870.8 2552.6 1093.5 2554.2 870.8 2555.9 1113.8 2557.5 870.8 2559.1 1113.8 2560.7 891.0 2562.3 1113.8 2564.0 810.0 2565.6 1113.8 2567.2 870.8 2568.8 1113.8 2570.4 891.0 2572.1 1073.3 2573.7 891.0 2575.3 1113.8 2576.9 891.0 2578.5 972.0 2580.2 891.0 2581.8 1113.8 2583.4 891.0 2585.0 1113.8 2586.6 891.0 2588.3 992.3 2589.9 891.0 2591.5 1134.0 2593.1 891.0 2594.7 1194.8 2596.4 891.0 2598.0 1093.5 2599.6 891.0 2601.2 1113.8 2602.8 850.5 2604.5 1113.8 2606.1 891.0 2607.7 1134.0 2609.3 850.5 2610.9 1113.8 2612.6 911.3 2614.2 1134.0 2615.8 931.5 2617.4 1215.0 2619.0 951.8 2620.7 1154.3 2622.3 1012.5 2623.9 1215.0 2625.5 891.0 2627.1 1032.8 2628.8 1032.8 2630.4 1235.3 2632.0 911.3 2633.6 1154.3 2635.2 911.3 2636.9 1154.3 2638.5 931.5 2640.1 1154.3 2641.7 931.5 2643.3 1154.3 2645.0 931.5 2646.6 1154.3 2648.2 931.5 2649.8 1113.8 2651.4 951.8 2653.1 1154.3 2654.7 931.5 2656.3 1154.3 2657.9 891.0 2659.5 1194.8 2661.2 931.5 2662.8 1154.3 2664.4 931.5 2666.0 1012.5 2667.6 931.5 2669.3 1174.5 2670.9 931.5 2672.5 1012.5 2674.1 931.5 2675.7 1174.5 2677.4 951.8 2679.0 1194.8 2680.6 951.8 2682.2 1194.8 2683.8 951.8 2685.5 1194.8 2687.1 951.8 2688.7 1174.5 2690.3 1053.0 2691.9 1174.5 2693.6 951.8 2695.2 1194.8 2696.8 951.8 2698.4 1194.8 2700.0 951.8 2701.7 1174.5 2703.3 951.8 2704.9 1154.3 2706.5 951.8 2708.1 1154.3 2709.8 951.8 2711.4 1174.5 2713.0 951.8 2714.6 1032.8 2716.2 931.5 2717.9 1154.3 2719.5 951.8 2721.1 1154.3 2722.7 951.8 2724.3 1093.5 2726.0 951.8 2727.6 1154.3 2729.2 951.8 2730.8 1134.0 2732.4 951.8 2734.1 1154.3 2735.7 951.8 2737.3 1154.3 2738.9 1032.8 2740.5 1154.3 2742.2 1093.5 2743.8 1174.5 2745.4 992.3" fill="none" stroke="#5b95de" stroke-width="1.9" stroke-linejoin="miter"/><path d="M1399 224 V1373" stroke="#a6a6aa" stroke-width="2"/></svg>
<div class="t" style="top:235.74px;font-size:19.4px;line-height:19.4px;color:#6a6a6f;font-weight:normal;font-family:'Liberation Mono', monospace;left:1003.00px;">99.50</div>
<div class="t" style="top:370.49px;font-size:19.4px;line-height:19.4px;color:#6a6a6f;font-weight:normal;font-family:'Liberation Mono', monospace;left:1003.00px;">99.48</div>
<div class="t" style="top:505.24px;font-size:19.4px;line-height:19.4px;color:#6a6a6f;font-weight:normal;font-family:'Liberation Mono', monospace;left:1003.00px;">99.46</div>
<div class="t" style="top:639.99px;font-size:19.4px;line-height:19.4px;color:#6a6a6f;font-weight:normal;font-family:'Liberation Mono', monospace;left:1003.00px;">99.44</div>
<div class="t" style="top:774.74px;font-size:19.4px;line-height:19.4px;color:#6a6a6f;font-weight:normal;font-family:'Liberation Mono', monospace;left:1003.00px;">99.42</div>
<div class="t" style="top:909.49px;font-size:19.4px;line-height:19.4px;color:#6a6a6f;font-weight:normal;font-family:'Liberation Mono', monospace;left:1003.00px;">99.40</div>
<div class="t" style="top:1044.24px;font-size:19.4px;line-height:19.4px;color:#6a6a6f;font-weight:normal;font-family:'Liberation Mono', monospace;left:1003.00px;">99.38</div>
<div class="t" style="top:1178.99px;font-size:19.4px;line-height:19.4px;color:#6a6a6f;font-weight:normal;font-family:'Liberation Mono', monospace;left:1003.00px;">99.36</div>
<div class="t" style="top:1313.74px;font-size:19.4px;line-height:19.4px;color:#6a6a6f;font-weight:normal;font-family:'Liberation Mono', monospace;left:1003.00px;">99.34</div>
<div class="t" style="top:1347.14px;font-size:19.4px;line-height:19.4px;color:#6a6a6f;font-weight:normal;font-family:'Liberation Mono', monospace;left:586.00px;width:1000px;text-align:center;">0.00</div>
<div class="t" style="top:1347.14px;font-size:19.4px;line-height:19.4px;color:#6a6a6f;font-weight:normal;font-family:'Liberation Mono', monospace;left:910.00px;width:1000px;text-align:center;">50</div>
<div class="t" style="top:1347.14px;font-size:19.4px;line-height:19.4px;color:#6a6a6f;font-weight:normal;font-family:'Liberation Mono', monospace;left:1233.40px;width:1000px;text-align:center;">100</div>
<div class="t" style="top:1347.14px;font-size:19.4px;line-height:19.4px;color:#6a6a6f;font-weight:normal;font-family:'Liberation Mono', monospace;left:1557.10px;width:1000px;text-align:center;">150</div>
<div class="t" style="top:1347.14px;font-size:19.4px;line-height:19.4px;color:#6a6a6f;font-weight:normal;font-family:'Liberation Mono', monospace;left:1880.80px;width:1000px;text-align:center;">200</div>
<div class="t" style="top:1347.14px;font-size:19.4px;line-height:19.4px;color:#6a6a6f;font-weight:normal;font-family:'Liberation Mono', monospace;right:119.60px;text-align:right;">257.36</div>
<div class="b" style="left:1066.00px;top:248.50px;width:60.00px;height:59.50px;background:#fafafa;border-radius:5px;box-shadow:0 3px 7px rgba(0,0,0,0.2);"></div>
<svg class="b" style="left:1066px;top:248.5px;" width="60" height="60" viewBox="0 0 60 60">
<g fill="none" stroke="#707074" stroke-width="2.7" stroke-linecap="round" stroke-linejoin="round">
<path d="M45.9 13.5 L32.5 26.9 M32.5 16.5 V26.9 H42.9"/>
<path d="M14.3 45.1 L26.7 32.7 M16.8 32.7 H26.7 V42.3"/>
</g></svg>
<div class="b" style="left:1138.50px;top:248.50px;width:335.50px;height:119.00px;background:#fafafa;border-radius:5px;box-shadow:0 2px 6px rgba(0,0,0,0.18);"></div>
<div class="b" style="left:1160.00px;top:270.00px;width:16.00px;height:16.00px;background:#5b94dc;border-radius:3px;"></div>
<div class="b" style="left:1160.00px;top:330.00px;width:16.00px;height:16.00px;background:#e5794f;border-radius:3px;"></div>
<div class="t" style="top:265.56px;font-size:24.5px;line-height:24.5px;color:#303034;font-weight:normal;font-family:'Liberation Sans', sans-serif;left:1212.40px;">Fluid Pressure</div>
<div class="t" style="top:325.26px;font-size:24.5px;line-height:24.5px;color:#303034;font-weight:normal;font-family:'Liberation Sans', sans-serif;left:1212.40px;">Critical</div>
<svg class="b" style="left:0;top:0;" width="2906" height="1674"><path d="M2718.84 185.94 L2719.03 182.95 L2724.57 182.95 L2724.76 185.94 L2727.13 187.31 L2729.81 185.97 L2732.58 190.77 L2730.09 192.43 L2730.09 195.17 L2732.58 196.83 L2729.81 201.63 L2727.13 200.29 L2724.76 201.66 L2724.57 204.65 L2719.03 204.65 L2718.84 201.66 L2716.47 200.29 L2713.79 201.63 L2711.02 196.83 L2713.51 195.17 L2713.51 192.43 L2711.02 190.77 L2713.79 185.97 L2716.47 187.31Z M2725.9 193.8 A4.1 4.1 0 1 0 2717.7000000000003 193.8 A4.1 4.1 0 1 0 2725.9 193.8Z" fill="#717176" fill-rule="evenodd"/></svg>
<div class="b" style="left:2759.80px;top:184.30px;width:4.40px;height:4.40px;background:#6a6a6f;border-radius:50%;"></div>
<div class="b" style="left:2759.80px;top:191.80px;width:4.40px;height:4.40px;background:#6a6a6f;border-radius:50%;"></div>
<div class="b" style="left:2759.80px;top:199.30px;width:4.40px;height:4.40px;background:#6a6a6f;border-radius:50%;"></div>
<div class="b" style="left:112.00px;top:1372.50px;width:2682.00px;height:3.00px;background:#d6d6d8;"></div>
<div class="b" style="left:128.00px;top:1410.00px;width:2650.00px;height:12.00px;background:#dedede;"></div>
<div class="b" style="left:346.00px;top:1410.00px;width:206.00px;height:12.00px;background:#adadb2;"></div>
<div class="b" style="left:605.00px;top:1410.00px;width:356.00px;height:12.00px;background:#adadb2;"></div>
<div class="b" style="left:1536.00px;top:1410.00px;width:206.00px;height:12.00px;background:#adadb2;"></div>
<div class="b" style="left:625.00px;top:1400.50px;width:4.00px;height:31.00px;background:#2e2e33;border-radius:2px;"></div>
<svg class="b" style="left:146px;top:1463px;" width="25" height="32" viewBox="0 0 25 32"><path d="M1 1 H24 V23.5 L12.5 31 L1 23.5Z" fill="#b9b9bc"/></svg>
<svg class="b" style="left:209px;top:1461px;" width="36" height="36" viewBox="0 0 36 36"><circle cx="18" cy="18" r="15" fill="none" stroke="#6a6a6f" stroke-width="2"/><path d="M18 14.5 V26" stroke="#6a6a6f" stroke-width="2.2"/><circle cx="18" cy="10.3" r="1.5" fill="#6a6a6f"/></svg>
<div class="t" style="top:1471.26px;font-size:22.5px;line-height:22.5px;color:#333338;font-weight:normal;font-family:'Liberation Mono', monospace;left:282.50px;transform:scaleY(1.18);transform-origin:0 28px;">2024-03-09 11:09:19.702 AST</div>
<svg class="b" style="left:1350px;top:1455px;" width="210" height="50" viewBox="1350 1455 210 50">
<g fill="none" stroke="#6a6a6f" stroke-width="2.3" stroke-linejoin="round">
<path d="M1363.5 1465.5 V1492"/>
<path d="M1390 1466.5 L1370 1478.8 L1390 1491 Z"/>
<path d="M1444 1466.5 L1468 1478.8 L1444 1491 Z"/>
<path d="M1516 1466.5 L1536 1478.8 L1516 1491 Z"/>
<path d="M1542 1465.5 V1492"/>
</g></svg>
<svg class="b" style="left:2590px;top:1458px;" width="44" height="42" viewBox="2590 1458 44 42">
<g fill="none" stroke="#5a3fcf" stroke-width="2.3" stroke-linecap="butt" stroke-linejoin="miter">
<path d="M2615.6 1464.4 L2621.3 1469.9 L2615.6 1475.4"/>
<path d="M2621.3 1469.9 H2604.6 A9 9 0 0 0 2598.5 1484.6"/>
<path d="M2608.4 1482.5 L2602.7 1488 L2608.4 1493.5"/>
<path d="M2602.7 1488 H2618.9 A9 9 0 0 0 2625.5 1472.8"/>
</g></svg>
<div class="t" style="top:1466.38px;font-size:24px;line-height:24px;color:#303034;font-weight:bold;font-family:'Liberation Sans', sans-serif;left:2678.00px;">1×</div>
<svg class="b" style="left:2733px;top:1475px;" width="17" height="9" viewBox="0 0 17 9"><path d="M0 0 H17 L8.5 9Z" fill="#3a3a3f"/></svg>
</body></html>
